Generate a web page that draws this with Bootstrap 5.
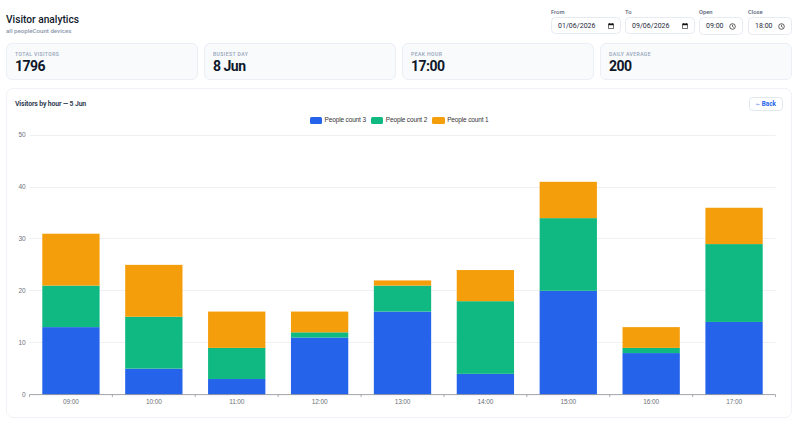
<!DOCTYPE html>
<html lang="en">
<head>
    <meta charset="UTF-8">
    <meta name="viewport" content="width=device-width, initial-scale=1">
    <title>Visitor analytics</title>
    <!-- Bootstrap CSS -->
    <link href="https://cdn.jsdelivr.net/npm/bootstrap@5.3.0/dist/css/bootstrap.min.css" rel="stylesheet">
    <style>
        body {
            font-family: Roboto, "Liberation Sans", sans-serif;
            color: #0f172a;
            background-color: #fff;
            line-height: 1;
            overflow: hidden;
        }
        .page {
            padding: 8px 8px 0 6px;
        }
        .page-head {
            height: 35px;
        }
        .page-title {
            font-size: 10.2px;
            font-weight: 500;
            line-height: 12px;
            margin: 6px 0 0;
        }
        .page-sub {
            font-size: 6.15px;
            font-weight: 500;
            line-height: 8px;
            color: #8b96ab;
            margin-top: 1px;
        }
        .filters {
            gap: 4px;
        }
        .filter-label {
            font-size: 5.8px;
            font-weight: 500;
            line-height: 7px;
            color: #56637a;
            margin: 1px 0;
        }
        .filter-box {
            border: 1px solid #e6ebf2;
            border-radius: 4.5px;
            font-size: 7px;
            letter-spacing: .03px;
            color: #1e293b;
            padding: 1px 6px 0;
        }
        .date-box {
            width: 70px;
            height: 17px;
        }
        .time-box {
            width: 44px;
            height: 18px;
        }
        .time-field + .time-field {
            margin-left: 1px;
        }
        .stats {
            gap: 6px;
        }
        .stat {
            height: 37px;
            background-color: #f8fafc;
            border: 1px solid #eaeff5;
            border-radius: 6px;
            padding: 7px 8px 0;
        }
        .stat-label {
            font-size: 5.1px;
            font-weight: 500;
            line-height: 6px;
            letter-spacing: .4px;
            text-transform: uppercase;
            color: #94a3b8;
        }
        .stat-value {
            font-size: 14px;
            font-weight: 700;
            line-height: 15px;
            letter-spacing: -.5px;
            margin-top: 2px;
        }
        .panel {
            height: 330px;
            margin-top: 8px;
            border: 1px solid #eff2f6;
            border-radius: 7px;
            padding: 8px 8px 0;
        }
        .panel-title {
            font-size: 6.9px;
            font-weight: 700;
            letter-spacing: -.15px;
            color: #334155;
        }
        .back-btn {
            width: 34px;
            height: 14px;
            padding: 0;
            border: 1px solid #e2e8f0;
            border-radius: 4px;
            background-color: #fff;
            font-size: 6.4px;
            font-weight: 700;
            line-height: 12px;
            color: #2563eb;
        }
        .back-btn span {
            font-family: "DejaVu Sans", sans-serif;
            font-size: 5px;
            font-weight: 400;
            opacity: .7;
        }
        .legend-row {
            height: 8px;
            margin-top: 5px;
            gap: 5px;
            font-family: "Liberation Sans", Arial, sans-serif;
            font-size: 6.5px;
            letter-spacing: -.15px;
            color: #333;
        }
        .swatch {
            width: 12.5px;
            height: 7px;
            border-radius: 1.5px;
            margin-right: 2.5px;
        }
        #hourChart {
            display: block;
            font-family: "Liberation Sans", Arial, sans-serif;
            font-size: 6.5px;
            letter-spacing: -.12px;
        }
    </style>
</head>
<body>
    <div class="page">
        <!-- Title and filters -->
        <header class="page-head d-flex justify-content-between align-items-start">
            <div>
                <h1 class="page-title">Visitor analytics</h1>
                <div class="page-sub">all peopleCount devices</div>
            </div>
            <div class="filters d-flex align-items-start">
                <div>
                    <div class="filter-label">From</div>
                    <div class="filter-box date-box d-flex align-items-center justify-content-between">
                        <span>01/06/2026</span>
                        <svg width="6" height="6" viewBox="0 0 12 12"><path d="M1 1.7h10v9.4H1z" fill="none" stroke="#111" stroke-width="1.2"/><path d="M1 1.5h10v3H1zM2.6 0h1.4v2H2.6zM8 0h1.4v2H8z" fill="#111"/></svg>
                    </div>
                </div>
                <div>
                    <div class="filter-label">To</div>
                    <div class="filter-box date-box d-flex align-items-center justify-content-between">
                        <span>09/06/2026</span>
                        <svg width="6" height="6" viewBox="0 0 12 12"><path d="M1 1.7h10v9.4H1z" fill="none" stroke="#111" stroke-width="1.2"/><path d="M1 1.5h10v3H1zM2.6 0h1.4v2H2.6zM8 0h1.4v2H8z" fill="#111"/></svg>
                    </div>
                </div>
                <div class="time-field">
                    <div class="filter-label">Open</div>
                    <div class="filter-box time-box d-flex align-items-center justify-content-between">
                        <span>09:00</span>
                        <svg width="7" height="7" viewBox="0 0 14 14" fill="none" stroke="#111" stroke-width="1.3"><circle cx="7" cy="7" r="5.6"/><path d="M7 3.5V7l2.6 1.8"/></svg>
                    </div>
                </div>
                <div class="time-field">
                    <div class="filter-label">Close</div>
                    <div class="filter-box time-box d-flex align-items-center justify-content-between">
                        <span>18:00</span>
                        <svg width="7" height="7" viewBox="0 0 14 14" fill="none" stroke="#111" stroke-width="1.3"><circle cx="7" cy="7" r="5.6"/><path d="M7 3.5V7l2.6 1.8"/></svg>
                    </div>
                </div>
            </div>
        </header>

        <!-- Summary cards -->
        <div class="stats d-flex">
            <div class="stat flex-fill w-25">
                <div class="stat-label">Total visitors</div>
                <div class="stat-value">1796</div>
            </div>
            <div class="stat flex-fill w-25">
                <div class="stat-label">Busiest day</div>
                <div class="stat-value">8 Jun</div>
            </div>
            <div class="stat flex-fill w-25">
                <div class="stat-label">Peak hour</div>
                <div class="stat-value">17:00</div>
            </div>
            <div class="stat flex-fill w-25">
                <div class="stat-label">Daily average</div>
                <div class="stat-value">200</div>
            </div>
        </div>

        <!-- Hourly chart -->
        <section class="panel">
            <div class="d-flex justify-content-between align-items-center">
                <div class="panel-title">Visitors by hour — 5 Jun</div>
                <button type="button" class="btn back-btn"><span>←</span> Back</button>
            </div>
            <div class="legend-row d-flex justify-content-center align-items-center" id="chartLegend"></div>
            <svg id="hourChart" width="769" height="286" viewBox="0 0 769 286"></svg>
        </section>
    </div>

    <script>
        const hours = ['09:00', '10:00', '11:00', '12:00', '13:00', '14:00', '15:00', '16:00', '17:00'];
        const series = [
            { name: 'People count 3', color: '#2563eb', data: [13, 5, 3, 11, 16, 4, 20, 8, 14] },
            { name: 'People count 2', color: '#10b981', data: [8, 10, 6, 1, 5, 14, 14, 1, 15] },
            { name: 'People count 1', color: '#f59e0b', data: [10, 10, 7, 4, 1, 6, 7, 4, 7] }
        ];

        // Legend
        document.getElementById('chartLegend').innerHTML = series.map(s =>
            `<div class="d-flex align-items-center"><span class="swatch" style="background-color: ${s.color}"></span>${s.name}</div>`
        ).join('');

        // Plot area inside the svg
        const left = 14.5, right = 760.5, base = 270.6, unit = 5.19;
        const band = (right - left) / hours.length;
        const barWidth = 57.3;
        let out = '';

        // Grid lines and y labels
        for (let v = 0; v <= 50; v += 10) {
            const y = base - v * unit;
            if (v > 0) {
                out += `<line x1="${left}" x2="${right}" y1="${Math.floor(y) + 0.5}" y2="${Math.floor(y) + 0.5}" stroke="#eef0f4"/>`;
            }
            out += `<text x="10.5" y="${y + 2}" text-anchor="end" fill="#6e7079">${v}</text>`;
        }

        // Stacked bars and hour labels
        hours.forEach((hour, i) => {
            const center = left + band * (i + 0.5);
            let total = 0;
            series.forEach(s => {
                total += s.data[i];
                out += `<rect x="${center - barWidth / 2}" y="${base - total * unit}" width="${barWidth}" height="${s.data[i] * unit}" fill="${s.color}"/>`;
            });
            out += `<text x="${center}" y="${base + 8.9}" text-anchor="middle" fill="#6e7079">${hour}</text>`;
        });

        // X axis with ticks
        out += `<line x1="${left}" x2="${right}" y1="${base}" y2="${base}" stroke="#8b8d94" stroke-width=".8"/>`;
        for (let i = 0; i <= hours.length; i++) {
            const x = left + band * i;
            out += `<line x1="${x}" x2="${x}" y1="${base}" y2="${base + 2.5}" stroke="#8b8d94" stroke-width=".7"/>`;
        }
        document.getElementById('hourChart').innerHTML = out;
    </script>

    <!-- Bootstrap JS -->
    <script src="https://cdn.jsdelivr.net/npm/bootstrap@5.3.0/dist/js/bootstrap.bundle.min.js"></script>
</body>
</html>
